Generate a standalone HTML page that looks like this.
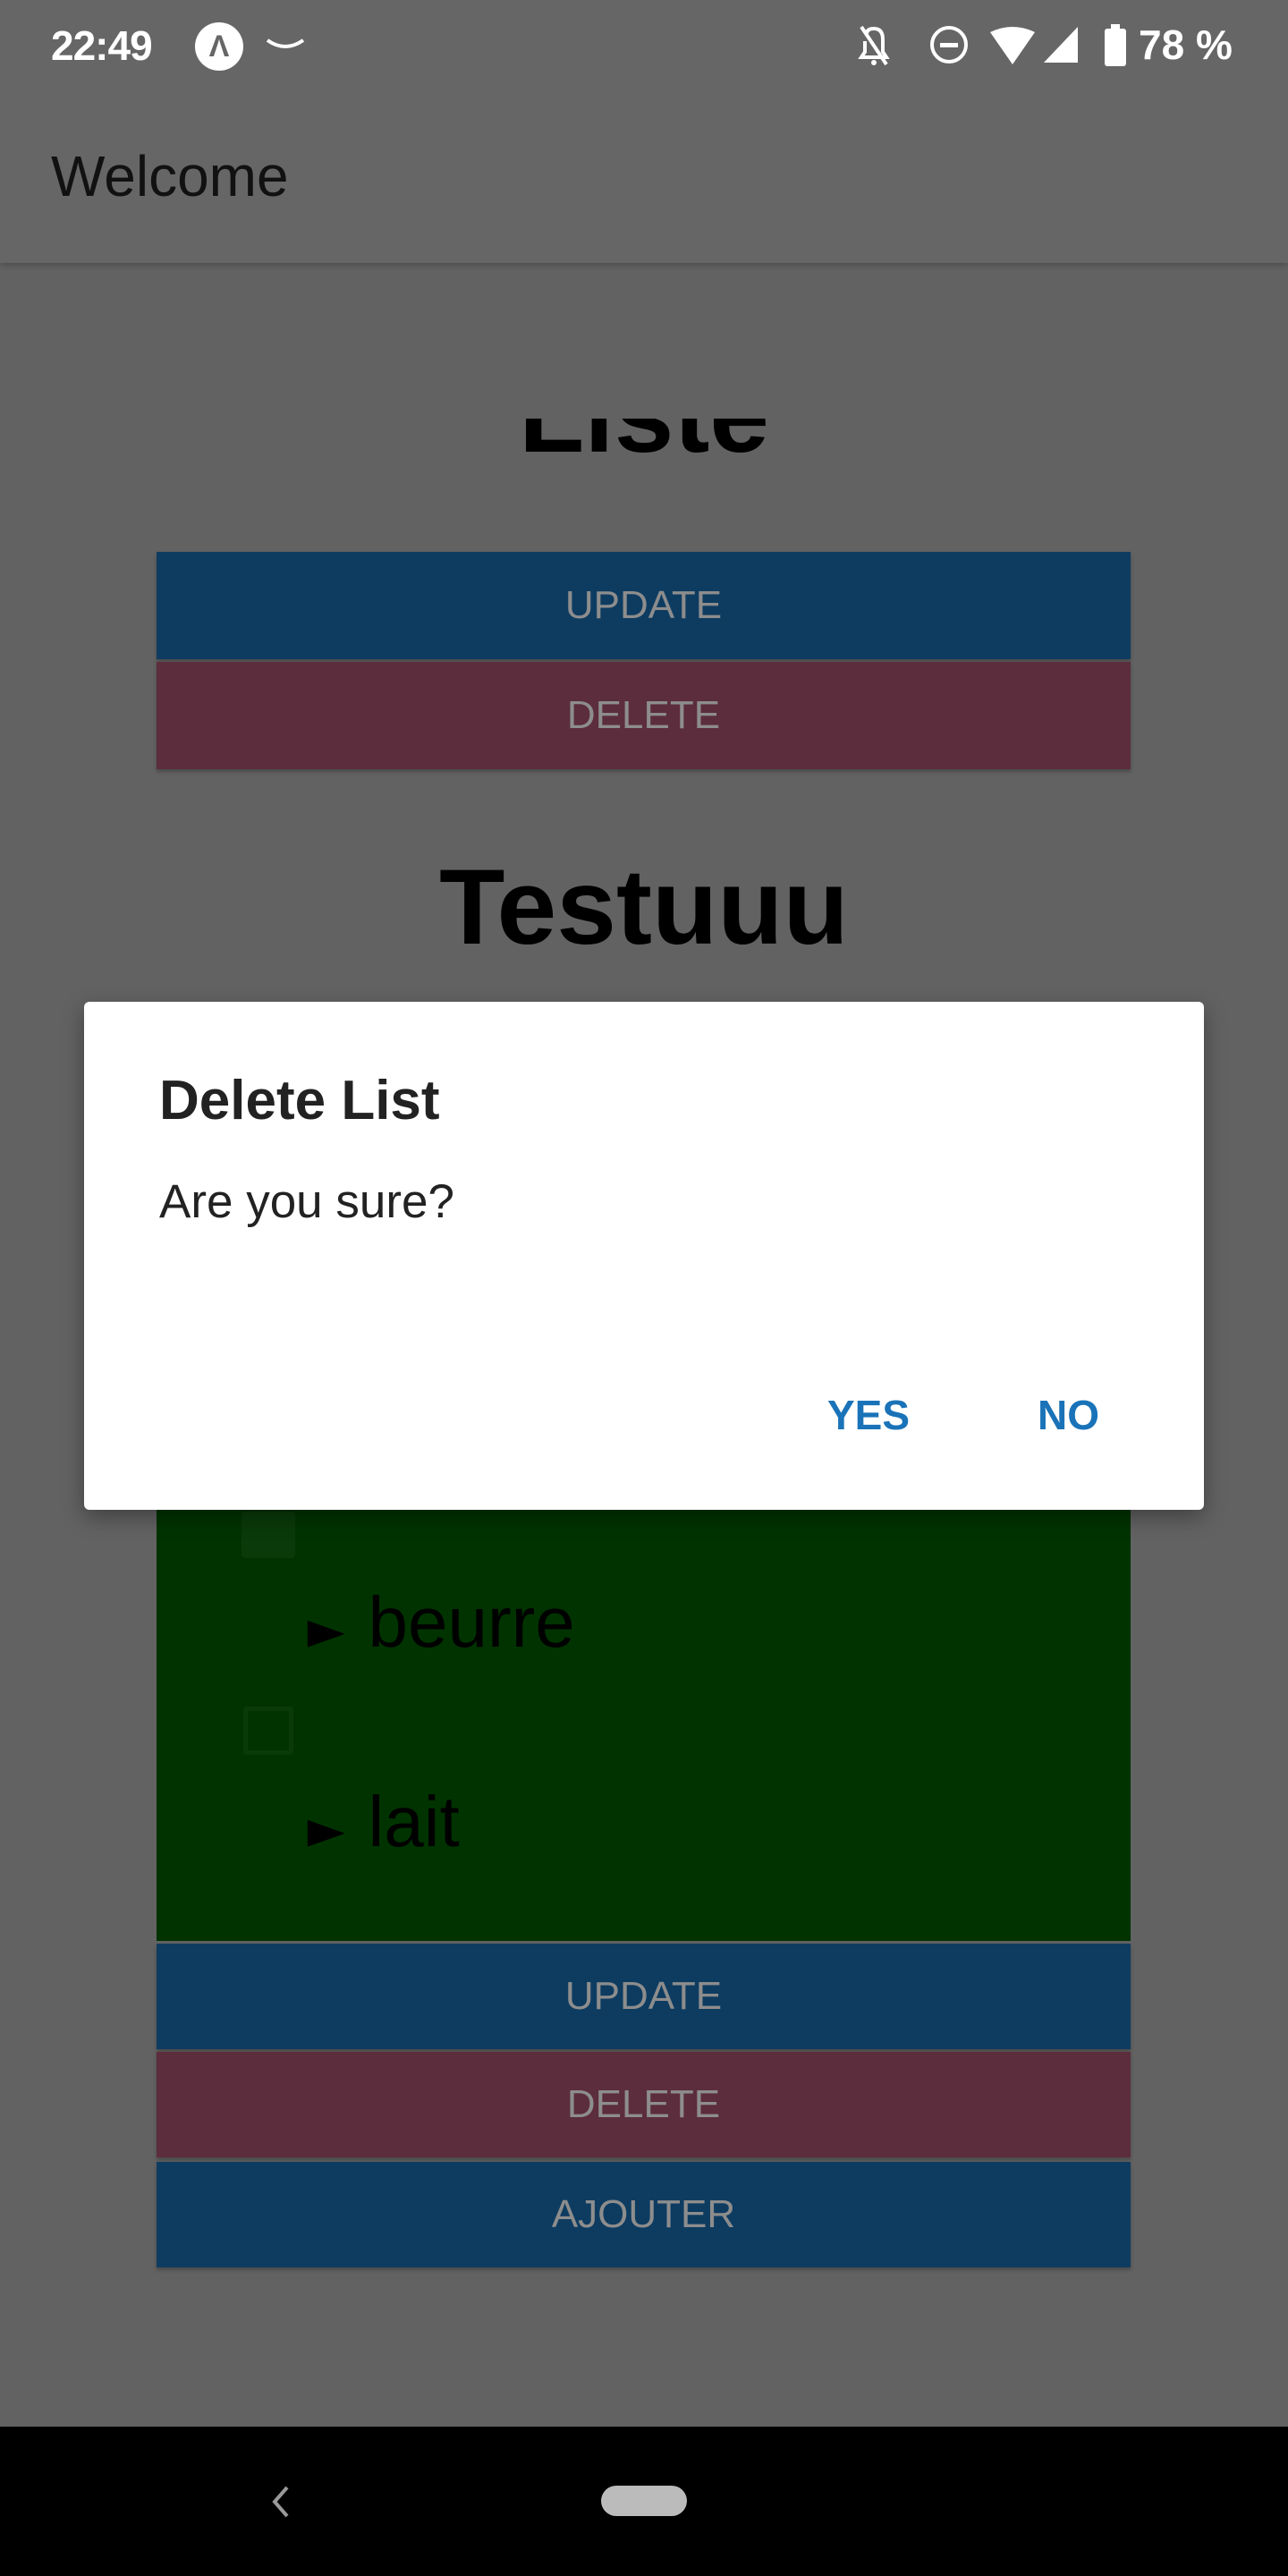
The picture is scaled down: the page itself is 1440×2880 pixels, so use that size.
<!DOCTYPE html>
<html><head><meta charset="utf-8"><style>
*{margin:0;padding:0;box-sizing:border-box}
body{width:1440px;height:2880px;background:#626262;position:relative;overflow:hidden;font-family:"Liberation Sans",sans-serif}
.a{position:absolute}
.btn{position:absolute;left:175px;width:1089px;color:#8d8d8d;font-size:44px;text-align:center;box-shadow:0 3px 4px rgba(0,0,0,.25)}
.blue{background:#0e3c61}.red{background:#5c2d3c}
</style></head><body>
<div class="a" style="left:0;top:0;width:1440px;height:294px;background:#666;box-shadow:0 3px 6px rgba(0,0,0,.2)"></div>
<div class="a" style="left:57px;top:24px;color:#fff;font-size:46px;font-weight:bold;letter-spacing:-1px">22:49</div>
<div class="a" style="left:218px;top:25px;width:54px;height:54px;border-radius:50%;background:#fff;color:#666;font-size:34px;font-weight:bold;text-align:center;line-height:54px">Λ</div>
<svg class="a" style="left:295px;top:35px" width="50" height="30"><path d="M4 10 Q24 24 44 10" stroke="#fff" stroke-width="4" fill="none"/></svg>
<svg class="a" style="left:955px;top:22px" width="430" height="60">
<path d="M8 8 L36 50 M14 16 Q14 10 22 10 Q32 10 32 22 V36 L36 42 H8 L12 36 V24" stroke="#fff" stroke-width="4" fill="none"/><circle cx="22" cy="48" r="3" fill="#fff"/>
<circle cx="106" cy="28" r="19" stroke="#fff" stroke-width="4" fill="none"/><rect x="96" y="26" width="20" height="5" fill="#fff"/>
<path d="M152 14 Q177 2 202 14 L177 50 Z" fill="#fff"/>
<path d="M212 48 L250 8 V48 Z" fill="#fff"/>
<rect x="280" y="10" width="24" height="42" rx="3" fill="#fff"/><rect x="287" y="5" width="10" height="6" fill="#fff"/>
<text x="318" y="44" fill="#fff" font-size="46" font-weight="bold" font-family="Liberation Sans">78 %</text>
</svg>
<div class="a" style="left:57px;top:160px;font-size:64px;color:#111">Welcome</div>
<div class="a" style="left:0;top:468px;width:1440px;height:90px;overflow:hidden"><div class="a" style="left:0;top:-73px;width:1440px;text-align:center;font-size:120px;font-weight:bold;color:#000">Liste</div></div>
<div class="btn blue" style="top:617px;height:120px;line-height:120px">UPDATE</div>
<div class="btn red" style="top:740px;height:120px;line-height:120px">DELETE</div>
<div class="a" style="left:0;top:945px;width:1440px;text-align:center;font-size:120px;font-weight:bold;color:#000">Testuuu</div>
<div class="a" style="left:175px;top:1600px;width:1089px;height:570px;background:#003300"></div>
<div class="a" style="left:270px;top:1690px;width:60px;height:52px;background:#0a3a0a;border-radius:4px"></div>
<div class="a" style="left:272px;top:1908px;width:56px;height:54px;border:5px solid #0a3a0a;border-radius:4px"></div>
<div class="a" style="left:340px;top:1768px;font-size:80px;color:#000"><span style="display:inline-block;transform:scaleX(1.4);font-size:50px;margin-right:22px">►</span>beurre</div>
<div class="a" style="left:340px;top:1991px;font-size:80px;color:#000"><span style="display:inline-block;transform:scaleX(1.4);font-size:50px;margin-right:22px">►</span>lait</div>
<div class="btn blue" style="top:2173px;height:118px;line-height:118px">UPDATE</div>
<div class="btn red" style="top:2294px;height:118px;line-height:118px">DELETE</div>
<div class="btn blue" style="top:2417px;height:118px;line-height:118px">AJOUTER</div>
<div class="a" style="left:94px;top:1120px;width:1252px;height:568px;background:#fff;border-radius:6px;box-shadow:0 8px 24px rgba(0,0,0,.35)"></div>
<div class="a" style="left:178px;top:1195px;font-size:62px;font-weight:bold;color:#222">Delete List</div>
<div class="a" style="left:178px;top:1313px;font-size:53px;color:#222">Are you sure?</div>
<div class="a" style="left:925px;top:1555px;font-size:46px;color:#1a73b8;font-weight:bold">YES</div>
<div class="a" style="left:1160px;top:1555px;font-size:46px;color:#1a73b8;font-weight:bold">NO</div>
<div class="a" style="left:0;top:2713px;width:1440px;height:167px;background:#000"></div>
<svg class="a" style="left:295px;top:2775px" width="40" height="44"><path d="M26 6 L12 22 L26 38" stroke="#999" stroke-width="4" fill="none"/></svg>
<div class="a" style="left:672px;top:2779px;width:96px;height:34px;border-radius:17px;background:#bbb"></div>
</body></html>
